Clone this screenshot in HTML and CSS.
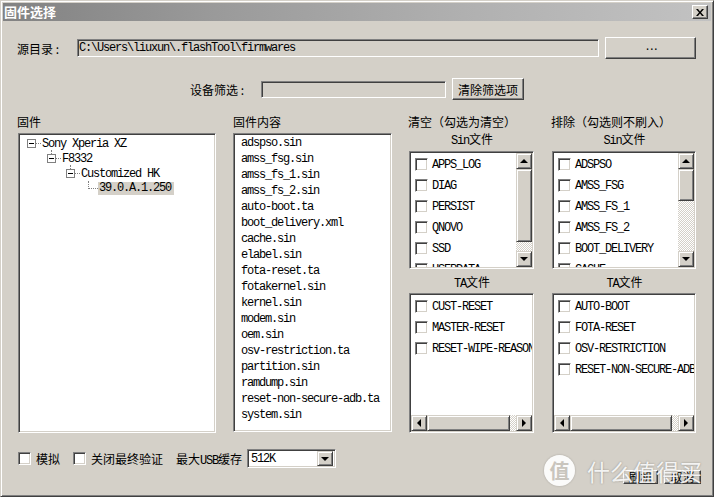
FILE: index.html
```html
<!DOCTYPE html>
<html lang="zh-CN">
<head>
<meta charset="utf-8">
<title>固件选择</title>
<link rel="stylesheet" href="styles.css">
</head>
<body>
<div class="window">
  <div class="titlebar">
    <span class="title">固件选择</span>
    <span class="close"><svg width="8" height="7" viewBox="0 0 8 7"><path d="M0 0h2l2 2.5L6 0h2L5 3.5 8 7H6L4 4.5 2 7H0l3-3.5z" fill="#000"/></svg></span>
  </div>

  <div class="row-src">
    <span class="lbl-src">源目录 :</span>
    <div class="field src-field"><span class="mono">C:\Users\liuxun\.flashTool\firmwares</span></div>
    <div class="btn btn-browse"><span class="mono">...</span></div>
  </div>

  <div class="row-filter">
    <span class="lbl-filter">设备筛选 :</span>
    <div class="field filter-field"></div>
    <div class="btn btn-clear">清除筛选项</div>
  </div>

  <div class="main">
    <div class="col col-tree">
      <div class="hdr">固件</div>
      <div class="sunken white tree">
        <div class="tn l0"><span class="exp"></span><span class="dash"></span><span class="mono">Sony Xperia XZ</span></div>
        <div class="tn l1"><span class="exp"></span><span class="dash"></span><span class="mono">F8332</span></div>
        <div class="tn l2"><span class="exp"></span><span class="dash"></span><span class="mono">Customized HK</span></div>
        <div class="tn l3"><span class="elbow"></span><span class="mono sel">39.0.A.1.250</span></div>
      </div>
    </div>

    <div class="col col-list">
      <div class="hdr">固件内容</div>
      <div class="sunken white list">
        <div class="li mono">adspso.sin</div>
        <div class="li mono">amss_fsg.sin</div>
        <div class="li mono">amss_fs_1.sin</div>
        <div class="li mono">amss_fs_2.sin</div>
        <div class="li mono">auto-boot.ta</div>
        <div class="li mono">boot_delivery.xml</div>
        <div class="li mono">cache.sin</div>
        <div class="li mono">elabel.sin</div>
        <div class="li mono">fota-reset.ta</div>
        <div class="li mono">fotakernel.sin</div>
        <div class="li mono">kernel.sin</div>
        <div class="li mono">modem.sin</div>
        <div class="li mono">oem.sin</div>
        <div class="li mono">osv-restriction.ta</div>
        <div class="li mono">partition.sin</div>
        <div class="li mono">ramdump.sin</div>
        <div class="li mono">reset-non-secure-adb.ta</div>
        <div class="li mono">system.sin</div>
      </div>
    </div>

    <div class="col col-clear">
      <div class="hdr">清空（勾选为清空）</div>
      <div class="sub"><span class="mono">Sin</span>文件</div>
      <div class="sunken white chk sin">
        <div class="items">
          <div class="ci"><span class="cb"></span><span class="mono">APPS_LOG</span></div>
          <div class="ci"><span class="cb"></span><span class="mono">DIAG</span></div>
          <div class="ci"><span class="cb"></span><span class="mono">PERSIST</span></div>
          <div class="ci"><span class="cb"></span><span class="mono">QNOVO</span></div>
          <div class="ci"><span class="cb"></span><span class="mono">SSD</span></div>
          <div class="ci"><span class="cb"></span><span class="mono">USERDATA</span></div>
        </div>
        <div class="vscroll">
          <span class="sbtn"><span class="arr up"></span></span>
          <span class="thumb vt-clear"></span>
          <span class="track"></span>
          <span class="sbtn"><span class="arr down"></span></span>
        </div>
      </div>
      <div class="sub sub-ta"><span class="mono">TA</span>文件</div>
      <div class="sunken white chk ta">
        <div class="items">
          <div class="ci"><span class="cb"></span><span class="mono">CUST-RESET</span></div>
          <div class="ci"><span class="cb"></span><span class="mono">MASTER-RESET</span></div>
          <div class="ci"><span class="cb"></span><span class="mono">RESET-WIPE-REASON</span></div>
        </div>
        <div class="hscroll">
          <span class="sbtn"><span class="arr left"></span></span>
          <span class="thumb ht-clear"></span>
          <span class="track"></span>
          <span class="sbtn"><span class="arr right"></span></span>
        </div>
      </div>
    </div>

    <div class="col col-excl">
      <div class="hdr">排除（勾选则不刷入）</div>
      <div class="sub"><span class="mono">Sin</span>文件</div>
      <div class="sunken white chk sin">
        <div class="items">
          <div class="ci"><span class="cb"></span><span class="mono">ADSPSO</span></div>
          <div class="ci"><span class="cb"></span><span class="mono">AMSS_FSG</span></div>
          <div class="ci"><span class="cb"></span><span class="mono">AMSS_FS_1</span></div>
          <div class="ci"><span class="cb"></span><span class="mono">AMSS_FS_2</span></div>
          <div class="ci"><span class="cb"></span><span class="mono">BOOT_DELIVERY</span></div>
          <div class="ci"><span class="cb"></span><span class="mono">CACHE</span></div>
        </div>
        <div class="vscroll">
          <span class="sbtn"><span class="arr up"></span></span>
          <span class="thumb vt-excl"></span>
          <span class="track"></span>
          <span class="sbtn"><span class="arr down"></span></span>
        </div>
      </div>
      <div class="sub sub-ta"><span class="mono">TA</span>文件</div>
      <div class="sunken white chk ta">
        <div class="items">
          <div class="ci"><span class="cb"></span><span class="mono">AUTO-BOOT</span></div>
          <div class="ci"><span class="cb"></span><span class="mono">FOTA-RESET</span></div>
          <div class="ci"><span class="cb"></span><span class="mono">OSV-RESTRICTION</span></div>
          <div class="ci"><span class="cb"></span><span class="mono">RESET-NON-SECURE-ADB</span></div>
        </div>
        <div class="hscroll">
          <span class="sbtn"><span class="arr left"></span></span>
          <span class="thumb ht-excl"></span>
          <span class="track"></span>
          <span class="sbtn"><span class="arr right"></span></span>
        </div>
      </div>
    </div>
  </div>

  <div class="row-bottom">
    <span class="cb"></span><span class="cbl">模拟</span>
    <span class="cb cb-gap"></span><span class="cbl">关闭最终验证</span>
    <span class="lbl-usb">最大<span class="mono">USB</span>缓存</span>
    <div class="combo"><span class="mono">512K</span><span class="combo-btn"><span class="arr down"></span></span></div>
  </div>

  <div class="row-actions">
    <div class="btn act act-ok">刷机</div>
    <div class="btn act act-cancel">取消</div>
  </div>

  <div class="watermark">
    <span class="wm-logo">值</span>
    <span class="wm-text">什么值得买</span>
  </div>
</div>
</body>
</html>
```

FILE: styles.css
```css
* { box-sizing: border-box; }

html, body {
  margin: 0;
  padding: 0;
}

body {
  width: 714px;
  height: 497px;
  overflow: hidden;
  font-family: "Noto Sans CJK SC", "Noto Sans", sans-serif;
  font-size: 12px;
  color: #000;
  background: #d4d0c8;
}

.mono {
  font-family: "Liberation Mono", "Noto Sans CJK SC", monospace;
  font-size: 12px;
  letter-spacing: -1.2px;
}

.window {
  position: relative;
  width: 714px;
  height: 497px;
  background: #d4d0c8;
  border: 1px solid;
  border-color: #d4d0c8 #404040 #404040 #d4d0c8;
  box-shadow: inset 1px 1px 0 #fff, inset -1px -1px 0 #808080;
  padding: 2px;
}

/* title bar */
.titlebar {
  height: 18px;
  background: linear-gradient(to right, #828282 0%, #9a9a9a 30%, #b0b0b0 65%, #c2c2c2 100%);
  display: flex;
  align-items: center;
  justify-content: space-between;
  padding: 0 3px 0 1px;
}

.title {
  color: #fff;
  font-weight: bold;
  font-size: 13px;
  line-height: 18px;
}

.close {
  width: 16px;
  height: 14px;
  background: #d4d0c8;
  border: 1px solid;
  border-color: #fff #404040 #404040 #fff;
  box-shadow: inset -1px -1px 0 #808080;
  display: flex;
  align-items: center;
  justify-content: center;
}

/* generic controls */
.btn {
  background: #d4d0c8;
  border: 1px solid;
  border-color: #fff #404040 #404040 #fff;
  box-shadow: inset -1px -1px 0 #808080;
  display: flex;
  align-items: center;
  justify-content: center;
  white-space: nowrap;
  overflow: hidden;
}

.field {
  background: #d4d0c8;
  border: 1px solid;
  border-color: #808080 #fff #fff #808080;
  box-shadow: inset 1px 1px 0 #404040, inset -1px -1px 0 #d4d0c8;
  display: flex;
  align-items: center;
  white-space: nowrap;
  overflow: hidden;
}

.sunken {
  border: 1px solid;
  border-color: #808080 #fff #fff #808080;
  box-shadow: inset 1px 1px 0 #404040, inset -1px -1px 0 #d4d0c8;
  padding: 1px;
}

.white { background: #fff; }

/* source row */
.row-src {
  display: flex;
  align-items: center;
  height: 22px;
  margin-top: 16px;
  padding-left: 14px;
}

.lbl-src {
  width: 60px;
  white-space: pre;
}

.src-field {
  width: 522px;
  height: 18px;
  padding-left: 1px;
}

.btn-browse {
  width: 91px;
  height: 22px;
  margin-left: 6px;
}

.btn-browse .mono {
  letter-spacing: -2.5px;
  font-size: 11px;
  padding-bottom: 2px;
}

/* filter row */
.row-filter {
  display: flex;
  align-items: center;
  height: 22px;
  margin-top: 19px;
  padding-left: 187px;
}

.lbl-filter {
  width: 71px;
  white-space: pre;
}

.filter-field {
  width: 185px;
  height: 17px;
  margin-top: 1px;
}

.btn-clear {
  width: 72px;
  height: 22px;
  margin-left: 6px;
  font-size: 12px;
}

/* main area */
.main {
  display: flex;
  align-items: flex-start;
  margin-top: 14px;
  padding-left: 14px;
}

.col { display: flex; flex-direction: column; }

.col-tree { width: 200px; }
.col-list { width: 160px; margin-left: 16px; }
.col-clear { width: 127px; margin-left: 15px; }
.col-excl { width: 146px; margin-left: 16px; }

.hdr {
  height: 16px;
  line-height: 16px;
  white-space: nowrap;
}

/* tree */
.tree {
  width: 198px;
  height: 300px;
  margin-top: 3px;
  margin-left: 1px;
  padding-top: 2px;
}

.tn {
  display: flex;
  align-items: center;
  height: 15px;
  white-space: nowrap;
}

.l0 { padding-left: 7px; }
.l1 { padding-left: 27px; }
.l2 { padding-left: 46px; }
.l3 { padding-left: 68px; }

.exp {
  position: relative;
  width: 9px;
  height: 9px;
  border: 1px solid #808080;
  background: #fff;
  flex: none;
}

.exp::before {
  content: "";
  position: absolute;
  left: 1px;
  top: 3px;
  width: 5px;
  height: 1px;
  background: #000;
}

.l1 .exp::after,
.l2 .exp::after {
  content: "";
  position: absolute;
  left: 3px;
  top: -5px;
  height: 4px;
  border-left: 1px dotted #808080;
}

.dash {
  width: 5px;
  height: 0;
  border-top: 1px dotted #808080;
  margin-right: 1px;
  flex: none;
}

.elbow {
  align-self: flex-start;
  width: 10px;
  height: 8px;
  border-left: 1px dotted #808080;
  border-bottom: 1px dotted #808080;
  flex: none;
}

.sel {
  background: #d4d0c8;
  height: 13px;
  line-height: 13px;
  padding: 0 3px 0 1px;
}

/* content list */
.list {
  width: 159px;
  height: 299px;
  margin-top: 3px;
  padding: 1px;
  overflow: hidden;
}

.li {
  height: 16px;
  line-height: 16px;
  padding-left: 6px;
  white-space: nowrap;
}

/* check lists */
.sub {
  height: 16px;
  line-height: 16px;
  margin-top: 1px;
  text-align: center;
  white-space: nowrap;
  padding-left: 1px;
}

.sub-ta { margin-top: 5px; }

.chk {
  margin-left: 1px;
  display: flex;
  overflow: hidden;
}

.col-clear .chk { width: 125px; }
.col-excl .chk { width: 144px; }

.chk.sin {
  height: 118px;
  margin-top: 4px;
  flex-direction: row;
}

.chk.ta {
  height: 140px;
  margin-top: 3px;
  flex-direction: column;
}

.items {
  flex: 1;
  overflow: hidden;
  padding-top: 1px;
  min-width: 0;
}

.ci {
  display: flex;
  align-items: center;
  gap: 4px;
  height: 21px;
  padding-left: 4px;
  white-space: nowrap;
}

.cb {
  width: 13px;
  height: 13px;
  flex: none;
  background: #fff;
  border: 1px solid;
  border-color: #808080 #fff #fff #808080;
  box-shadow: inset 1px 1px 0 #404040, inset -1px -1px 0 #d4d0c8;
}

/* scrollbars */
.vscroll {
  width: 16px;
  flex: none;
  display: flex;
  flex-direction: column;
}

.hscroll {
  height: 16px;
  flex: none;
  display: flex;
  flex-direction: row;
}

.sbtn,
.thumb,
.combo-btn {
  background: #d4d0c8;
  border: 1px solid;
  border-color: #d4d0c8 #404040 #404040 #d4d0c8;
  box-shadow: inset 1px 1px 0 #fff, inset -1px -1px 0 #808080;
  flex: none;
}

.sbtn {
  width: 16px;
  height: 16px;
  display: flex;
  align-items: center;
  justify-content: center;
}

.track {
  flex: 1;
  background: repeating-conic-gradient(#fff 0 25%, #d4d0c8 0 50%) 0 0 / 2px 2px;
}

.vt-clear { height: 73px; }
.vt-excl { height: 32px; }
.ht-clear { width: 83px; }
.ht-excl { width: 102px; }

.arr {
  width: 0;
  height: 0;
  display: block;
}

.arr.up {
  border-left: 4px solid transparent;
  border-right: 4px solid transparent;
  border-bottom: 4px solid #000;
}

.arr.down {
  border-left: 4px solid transparent;
  border-right: 4px solid transparent;
  border-top: 4px solid #000;
}

.arr.left {
  border-top: 4px solid transparent;
  border-bottom: 4px solid transparent;
  border-right: 4px solid #000;
}

.arr.right {
  border-top: 4px solid transparent;
  border-bottom: 4px solid transparent;
  border-left: 4px solid #000;
}

/* bottom row */
.row-bottom {
  display: flex;
  align-items: center;
  height: 19px;
  margin-top: 16px;
  padding-left: 15px;
  white-space: nowrap;
}

.cbl { margin-left: 5px; }
.cb-gap { margin-left: 13px; }
.lbl-usb { margin-left: 13px; }

.combo {
  width: 89px;
  height: 19px;
  margin-left: 5px;
  background: #fff;
  border: 1px solid;
  border-color: #808080 #fff #fff #808080;
  box-shadow: inset 1px 1px 0 #404040, inset -1px -1px 0 #d4d0c8;
  display: flex;
  align-items: center;
  padding: 2px 2px 2px 3px;
}

.combo-btn {
  width: 16px;
  height: 15px;
  margin-left: auto;
  display: flex;
  align-items: center;
  justify-content: center;
}

/* action buttons */
.row-actions {
  display: flex;
  justify-content: flex-end;
  margin-top: 2px;
  padding-right: 10px;
}

.act {
  height: 14px;
  font-size: 12px;
  line-height: 12px;
}

.act-ok { width: 35px; }
.act-cancel { width: 37px; margin-left: 6px; }

/* watermark overlay */
.watermark {
  position: absolute;
  left: 543px;
  top: 454px;
  display: flex;
  align-items: center;
  pointer-events: none;
}

.wm-logo {
  width: 31px;
  height: 31px;
  border-radius: 50%;
  background: rgba(255, 255, 255, 0.9);
  color: #c9c5bd;
  font-size: 20px;
  font-weight: bold;
  line-height: 31px;
  text-align: center;
  box-shadow: 0 0 2px rgba(0, 0, 0, 0.25);
}

.wm-text {
  margin-left: 12px;
  color: rgba(255, 255, 255, 0.9);
  font-size: 23px;
  line-height: 28px;
  letter-spacing: 0;
  text-shadow: 0 0 2px rgba(0, 0, 0, 0.35);
  white-space: nowrap;
}
```
